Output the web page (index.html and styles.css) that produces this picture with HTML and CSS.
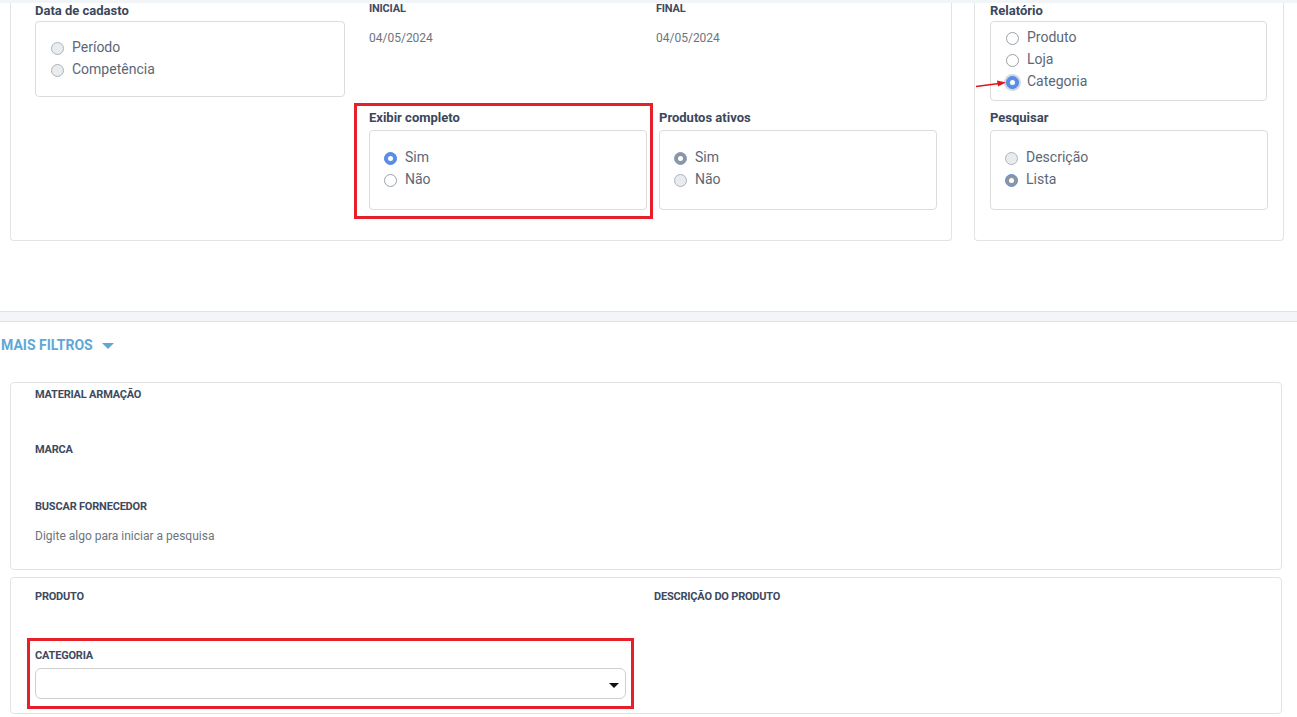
FILE: index.html
```html
<!DOCTYPE html>
<html lang="pt-BR">
<head>
    <meta charset="UTF-8">
    <meta name="viewport" content="width=device-width, initial-scale=1.0">
    <title>Relatório de Produtos</title>
    <link rel="stylesheet" href="styles.css">
</head>
<body>

    <div class="top-strip"></div>

    <!-- Filtros principais -->
    <div class="top-row">
        <div class="card card-main">
            <div class="col col-1">
                <div class="group-label">Data de cadasto</div>
                <div class="radio-box box-cadastro">
                    <div class="radio-row"><span class="radio disabled"></span>Período</div>
                    <div class="radio-row"><span class="radio disabled"></span>Competência</div>
                </div>
            </div>

            <div class="col col-2">
                <div class="field-label">INICIAL</div>
                <div class="date-value">04/05/2024</div>
            </div>
            <div class="col col-3">
                <div class="field-label">FINAL</div>
                <div class="date-value">04/05/2024</div>
            </div>

            <div class="col col-2 row-2 highlight highlight-exibir">
                <div class="group-label">Exibir completo</div>
                <div class="radio-box">
                    <div class="radio-row"><span class="radio checked"></span>Sim</div>
                    <div class="radio-row"><span class="radio"></span>Não</div>
                </div>
            </div>
            <div class="col col-3 row-2 shift">
                <div class="group-label">Produtos ativos</div>
                <div class="radio-box">
                    <div class="radio-row"><span class="radio checked-gray"></span>Sim</div>
                    <div class="radio-row"><span class="radio disabled"></span>Não</div>
                </div>
            </div>
        </div>

        <div class="card card-side">
            <div class="group-label">Relatório</div>
            <div class="radio-box box-relatorio">
                <div class="radio-row"><span class="radio"></span>Produto</div>
                <div class="radio-row"><span class="radio"></span>Loja</div>
                <div class="radio-row"><span class="radio checked focus"></span>Categoria</div>
            </div>
            <div class="group-label spaced">Pesquisar</div>
            <div class="radio-box">
                <div class="radio-row"><span class="radio disabled"></span>Descrição</div>
                <div class="radio-row"><span class="radio checked-gray blue-edge"></span>Lista</div>
            </div>

            <svg class="arrow" width="34" height="12" viewBox="0 0 34 12">
                <line x1="1" y1="9.5" x2="24" y2="6.5" stroke="#e3141b" stroke-width="1.6"/>
                <polygon points="22,3.5 31,5.5 23,9.5" fill="#e3141b"/>
            </svg>
        </div>
    </div>

    <div class="band"></div>

    <!-- Mais filtros -->
    <div class="more-toggle">MAIS FILTROS <span class="caret"></span></div>

    <div class="card card-wide card-extra">
        <div class="field-label">MATERIAL ARMAÇÃO</div>
        <div class="field-label lbl-marca">MARCA</div>
        <div class="field-label lbl-fornecedor">BUSCAR FORNECEDOR</div>
        <div class="hint">Digite algo para iniciar a pesquisa</div>
    </div>

    <div class="card card-wide card-produto">
        <div class="field-label">PRODUTO</div>
        <div class="field-label">DESCRIÇÃO DO PRODUTO</div>
        <div class="highlight highlight-categoria">
            <div class="field-label">CATEGORIA</div>
            <div class="select-box"><span class="select-caret"></span></div>
        </div>
    </div>

</body>
</html>
```

FILE: styles.css
```css
body {
    margin: 0;
    padding: 0;
    font-family: Roboto, "Liberation Sans", Arial, sans-serif;
    background: #ffffff;
    color: #3b475a;
}

.top-strip {
    height: 3px;
    background-color: #f2f5f8;
}

/* Top cards */
.top-row {
    display: flex;
    gap: 22px;
    padding-left: 10px;
}

.card {
    background: white;
    border: 1px solid #e3e3e3;
    border-radius: 4px;
    box-sizing: border-box;
    position: relative;
}

.card-main,
.card-side {
    border-top: none;
    border-radius: 0 0 4px 4px;
    height: 238px;
}

.card-main {
    width: 942px;
    padding-left: 24px;
    display: grid;
    grid-template-columns: 334px 287px 1fr;
    grid-template-rows: 107px auto;
    align-items: start;
}

.col-1 {
    grid-column: 1;
    grid-row: 1 / 3;
}

.col-2 {
    grid-column: 2;
}

.col-3 {
    grid-column: 3;
}

.row-2 {
    grid-row: 2;
}

.shift {
    margin-left: 3px;
}

.card-side {
    width: 310px;
    padding-left: 15px;
}

.group-label {
    font-size: 13px;
    font-weight: bold;
    line-height: 15px;
    color: #3b475a;
    margin-bottom: 5px;
}

.col-1 .group-label,
.card-side > .group-label:first-child {
    margin-bottom: 3px;
}

.group-label.spaced {
    margin-top: 9px;
}

.radio-box {
    width: 278px;
    height: 80px;
    box-sizing: border-box;
    border: 1px solid #dcdcdc;
    border-radius: 4px;
    padding-left: 14px;
    padding-bottom: 4px;
    display: flex;
    flex-direction: column;
    justify-content: center;
}

.box-cadastro {
    width: 310px;
    height: 76px;
    padding-left: 15px;
    padding-bottom: 2px;
}

.box-relatorio {
    width: 277px;
    padding-left: 15px;
}

.radio-row {
    display: flex;
    align-items: center;
    gap: 8px;
    height: 22px;
    font-size: 14px;
    color: #5c6778;
}

.radio {
    width: 13px;
    height: 13px;
    box-sizing: border-box;
    border-radius: 50%;
    border: 1px solid #9aa1a9;
    background: #ffffff;
    margin-top: 2px;
    flex-shrink: 0;
    position: relative;
}

.radio.disabled {
    background: #e9ecef;
    border-color: #adb3ba;
}

.radio.checked,
.radio.checked-gray {
    border-color: #4d86e6;
    background: #5a8fe8;
}

.radio.checked-gray {
    border-color: #8a9bb8;
    background: #8c96a3;
}

.radio.blue-edge {
    border-color: #5b8fe6;
}

.radio.checked::after,
.radio.checked-gray::after {
    content: "";
    position: absolute;
    width: 5px;
    height: 5px;
    border-radius: 50%;
    background: white;
    top: 3px;
    left: 3px;
}

.radio.focus {
    box-shadow: 0 0 0 2px #d3d7dc;
}

.field-label {
    font-size: 11px;
    font-weight: bold;
    line-height: 13px;
    letter-spacing: -0.2px;
    color: #3d4a5f;
}

.col-2 .field-label,
.col-3 .field-label {
    margin-top: -1px;
}

.date-value {
    font-size: 12px;
    color: #6c757d;
    margin-top: 16px;
}

/* Red annotation frames */
.highlight {
    position: relative;
}

.highlight::after {
    content: "";
    position: absolute;
    border: 3px solid #e5202a;
    pointer-events: none;
}

.highlight-exibir {
    width: 278px;
}

.highlight-exibir::after {
    top: -7px;
    left: -15px;
    right: -6px;
    bottom: -9px;
}

.arrow {
    position: absolute;
    left: 0;
    top: 74px;
}

/* Separator */
.band {
    margin-top: 70px;
    height: 9px;
    background: #f3f5f8;
    border-top: 1px solid #dfe3e8;
    border-bottom: 1px solid #dfe3e8;
}

.more-toggle {
    margin-top: 13px;
    padding-left: 1px;
    font-size: 14px;
    font-weight: bold;
    line-height: 20px;
    color: #5ea8d6;
    display: flex;
    align-items: center;
    gap: 9px;
}

.caret {
    width: 0;
    height: 0;
    border-left: 6px solid transparent;
    border-right: 6px solid transparent;
    border-top: 6px solid #5ea8d6;
    margin-top: 2px;
}

.card-wide {
    margin-left: 10px;
    width: 1272px;
    padding-left: 24px;
}

.card-extra {
    margin-top: 27px;
    height: 188px;
    padding-top: 5px;
}

.lbl-marca {
    margin-top: 42px;
}

.lbl-fornecedor {
    margin-top: 44px;
}

.hint {
    font-size: 12px;
    color: #6c757d;
    margin-top: 16px;
}

.card-produto {
    margin-top: 7px;
    height: 137px;
    padding-top: 12px;
    display: grid;
    grid-template-columns: 619px 1fr;
    grid-template-rows: 59px auto;
    align-content: start;
}

.highlight-categoria {
    grid-column: 1;
    width: 591px;
}

.highlight-categoria::after {
    top: -11px;
    left: -8px;
    right: -8px;
    bottom: -10px;
}

.select-box {
    margin-top: 6px;
    height: 31px;
    box-sizing: border-box;
    border: 1px solid #cfcfcf;
    border-radius: 6px;
    display: flex;
    align-items: center;
    justify-content: flex-end;
    padding-right: 6px;
}

.select-caret {
    width: 0;
    height: 0;
    border-left: 5px solid transparent;
    border-right: 5px solid transparent;
    border-top: 5px solid #111;
    margin-top: 3px;
}
```
